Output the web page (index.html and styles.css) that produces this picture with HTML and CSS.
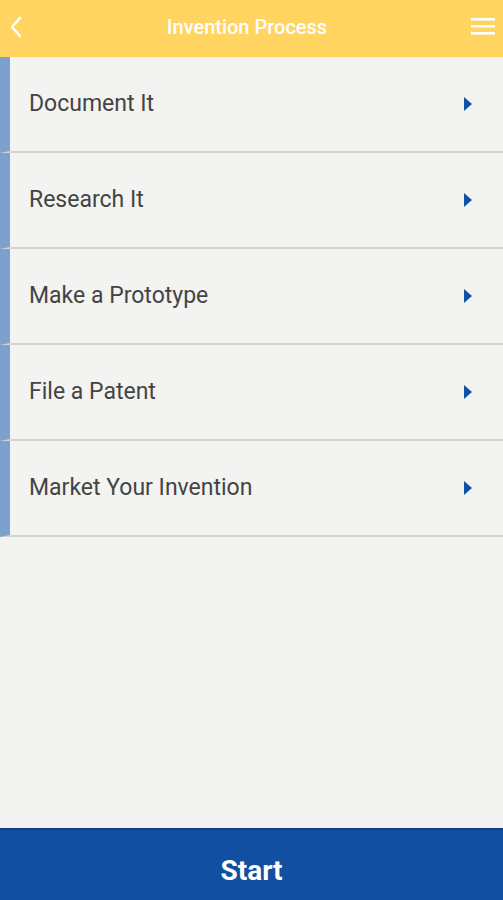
FILE: index.html
```html
<!DOCTYPE html>
<html>
<head>
<meta charset="utf-8">
<link rel="stylesheet" href="styles.css">
</head>
<body>
<div class="app">
  <header class="topbar">
    <svg class="back" width="14" height="22" viewBox="0 0 14 22"><path d="M11 2 L3 11 L11 20" fill="none" stroke="#fff" stroke-width="2.6" stroke-linecap="round" stroke-linejoin="round"/></svg>
    <h1 class="title">Invention Process</h1>
    <svg class="menu" width="24" height="20" viewBox="0 0 24 20"><rect x="0" y="2" width="24" height="2.6" fill="#fff"/><rect x="0" y="9" width="24" height="2.6" fill="#fff"/><rect x="0" y="16" width="24" height="2.6" fill="#fff"/></svg>
  </header>
  <ul class="list">
    <li class="item"><span class="label">Document It</span><span class="arrow"></span></li>
    <li class="item"><span class="label">Research It</span><span class="arrow"></span></li>
    <li class="item"><span class="label">Make a Prototype</span><span class="arrow"></span></li>
    <li class="item"><span class="label">File a Patent</span><span class="arrow"></span></li>
    <li class="item"><span class="label">Market Your Invention</span><span class="arrow"></span></li>
  </ul>
  <div class="spacer"></div>
  <footer class="start">Start</footer>
</div>
</body>
</html>
```
FILE: styles.css
```css
html, body { margin: 0; padding: 0; }
body { font-family: Roboto, "Liberation Sans", sans-serif; background: #f3f3f1; }
.app { display: flex; flex-direction: column; height: 900px; width: 503px; }
.topbar { height: 57px; background: #ffd460; display: flex; align-items: center; justify-content: space-between; padding: 0 8px 0 9px; box-sizing: border-box; flex-shrink: 0; }
.back { margin-top: -4px; }
.title { margin: 0 0 4px 0; font-size: 20px; font-weight: 500; color: #fff; }
.menu { margin-top: -6px; }
.list { list-style: none; margin: 0; padding: 0; }
.item { height: 94px; border-bottom: 2px solid #d4d4d2; border-left: 10px solid #7ea0cc; display: flex; align-items: center; justify-content: space-between; padding: 0 31px 0 19px; box-sizing: content-box; }
.label { font-size: 23px; color: #444; margin-top: -2px; }
.arrow { width: 0; height: 0; border-top: 7px solid transparent; border-bottom: 7px solid transparent; border-left: 8px solid #13509f; margin-top: 0; }
.spacer { flex: 1; }
.start { height: 72px; background: #1150a0; border-top: 2px solid #0c3f85; color: #fff; font-weight: 700; font-size: 28px; display: flex; align-items: center; justify-content: center; box-sizing: border-box; flex-shrink: 0; padding-top: 10px; }
```
